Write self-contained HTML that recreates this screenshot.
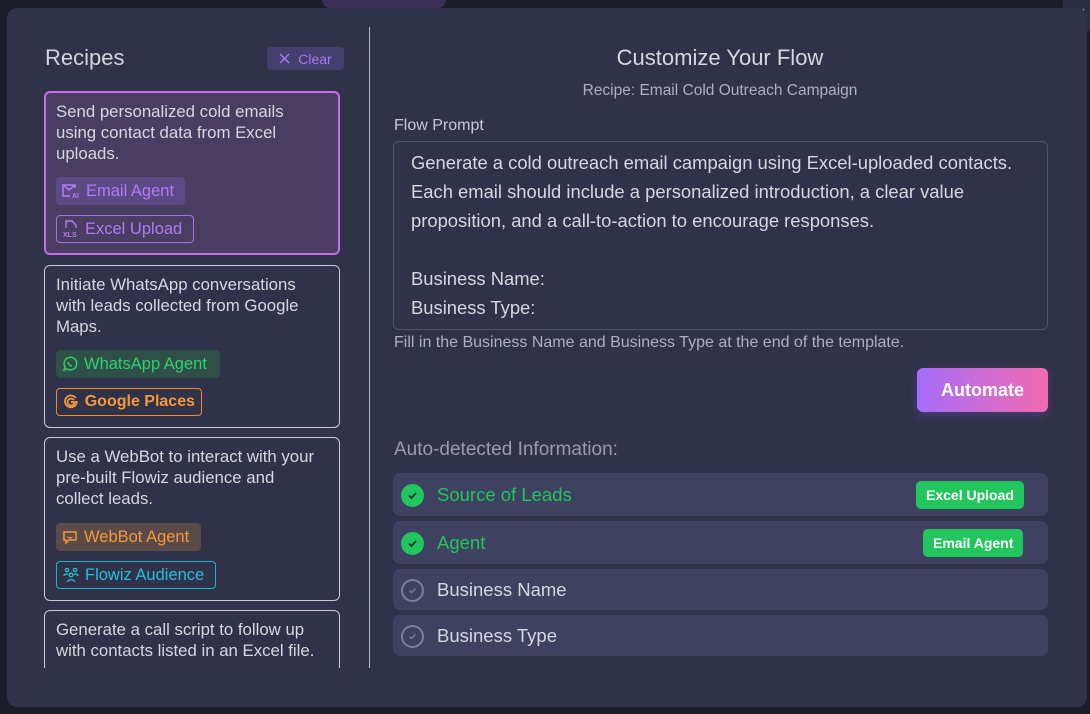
<!DOCTYPE html>
<html><head><meta charset="utf-8"><style>
*{box-sizing:border-box;margin:0;padding:0}
body{width:1090px;height:714px;overflow:hidden;background:#1b1d29;font-family:"Liberation Sans",sans-serif;position:relative}
.abs{position:absolute}
.modal{left:7px;top:8px;width:1080px;height:699px;background:#2f3248;border-radius:10px}
.card{position:absolute;left:44px;width:296px;border:1px solid #c9cad2;border-radius:6px;padding:0 11px}
.card p{color:#d6d7e0;font-size:16.8px;line-height:21px;margin-top:8px;white-space:nowrap}
.chip{position:absolute;left:11px;height:28px;border-radius:4px;font-size:16.5px;display:flex;align-items:center;padding:0 6px;gap:6px;white-space:nowrap}
.row{position:absolute;left:393px;width:655px;background:#3e4160;border-radius:7px}
.row .t{position:absolute;left:44px;font-size:18.5px;top:50%;transform:translateY(-50%)}
.ic{position:absolute;left:8px;top:50%;margin-top:-11px;width:23px;height:23px;border-radius:50%}
.badge{position:absolute;top:50%;transform:translateY(-50%);background:#22c55e;color:#fff;font-weight:bold;font-size:14px;border-radius:5px;height:28px;display:flex;align-items:center;padding:0 10px}
</style></head><body>
<div class="abs" style="left:322px;top:0;width:124px;height:8px;background:#3a2f55;border-radius:0 0 20px 20px"></div>
<div class="abs" style="left:1063px;top:0;width:27px;height:31px;background:#2c2f44"></div>
<svg class="abs" style="left:1070px;top:7px" width="16" height="16" viewBox="0 0 16 16"><path d="M2 2L14 14M14 2L2 14" stroke="#8c8fa0" stroke-width="1.6"/></svg>
<div class="abs modal"></div>
<div class="abs" style="left:369px;top:27px;width:1px;height:641px;background:#b8bac4"></div>

<div class="abs" style="left:45px;top:45px;font-size:22px;color:#d3d5de">Recipes</div>
<div class="abs" style="left:267px;top:47px;width:77px;height:23px;background:#453f6e;border-radius:4px;color:#a678f0;font-size:14px;display:flex;align-items:center;justify-content:center;gap:8px"><svg width="11" height="11" viewBox="0 0 11 11"><path d="M1 1L10 10M10 1L1 10" stroke="#a678f0" stroke-width="1.5"/></svg>Clear</div>

<div class="abs" style="left:0;top:0;width:369px;height:668px;overflow:hidden">
<div class="card" style="top:91px;height:164px;border:2px solid #c46ee8;background:#4a3d62;padding:0 10px"><p style="margin-top:8px">Send personalized cold emails<br>using contact data from Excel<br>uploads.</p>
<div class="chip" style="top:84px;left:10px;width:129px;background:#5c4a84;color:#b07cf5"><svg width="18" height="16" viewBox="0 0 18 16"><path d="M13 5V2H1v11h7M1 2l6 5 6-5" fill="none" stroke="#b07cf5" stroke-width="1.5"/><text x="10" y="15" font-size="7" font-weight="bold" fill="#b07cf5" font-family="Liberation Sans">AI</text></svg>Email Agent</div>
<div class="chip" style="top:122px;left:10px;width:138px;border:1px solid #a86ef0;color:#b07cf5"><svg width="16" height="18" viewBox="0 0 16 18"><path d="M3 8V1h6l4 4v3" fill="none" stroke="#b07cf5" stroke-width="1.4"/><text x="0" y="17" font-size="7" font-weight="bold" fill="#b07cf5" font-family="Liberation Sans">XLS</text></svg>Excel Upload</div></div>

<div class="card" style="top:265px;height:163px"><p>Initiate WhatsApp conversations<br>with leads collected from Google<br>Maps.</p>
<div class="chip" style="top:84px;width:164px;background:#2e5049;color:#2fcf6e"><svg width="16" height="16" viewBox="0 0 16 16"><path d="M2 14l1-3.2A6.3 6.3 0 1 1 5.2 13Z" fill="none" stroke="#2fcf6e" stroke-width="1.5"/><path d="M6 6c0 2 2 4 4 4" stroke="#2fcf6e" stroke-width="1.5" fill="none"/></svg>WhatsApp Agent</div>
<div class="chip" style="top:122px;width:146px;border:1px solid #f08a2a;color:#f59a3a;font-weight:bold;font-size:16px"><svg width="16" height="16" viewBox="0 0 16 16"><path d="M13 4A6 6 0 1 0 14 8H8M11 6A3.5 3.5 0 1 0 11.5 9" fill="none" stroke="#f59a3a" stroke-width="1.8"/></svg>Google Places</div></div>

<div class="card" style="top:437px;height:164px"><p>Use a WebBot to interact with your<br>pre-built Flowiz audience and<br>collect leads.</p>
<div class="chip" style="top:85px;width:145px;background:#5a4a48;color:#f5993a"><svg width="16" height="16" viewBox="0 0 16 16"><path d="M2 3h12v8H7l-3 3v-3H2Z" fill="none" stroke="#f5993a" stroke-width="1.5"/><path d="M5.5 8c1.5 1.2 3.5 1.2 5 0" stroke="#f5993a" stroke-width="1.3" fill="none"/></svg>WebBot Agent</div>
<div class="chip" style="top:123px;width:160px;border:1px solid #1ab6d0;color:#22c0dc"><svg width="16" height="16" viewBox="0 0 16 16" fill="none" stroke="#22c0dc" stroke-width="1.3"><circle cx="4" cy="3" r="1.6"/><circle cx="12" cy="3" r="1.6"/><circle cx="8" cy="8" r="1.8"/><path d="M4.5 15c0-3 7-3 7 0M1 9c0-2 3-2.5 4-1.5M15 9c0-2-3-2.5-4-1.5"/></svg>Flowiz Audience</div></div>

<div class="card" style="top:610px;height:80px"><p>Generate a call script to follow up<br>with contacts listed in an Excel file.</p></div>
</div>

<div class="abs" style="left:370px;width:700px;top:45px;text-align:center;font-size:22px;color:#d6d7e0">Customize Your Flow</div>
<div class="abs" style="left:370px;width:700px;top:82px;text-align:center;font-size:15.5px;color:#aeb0be">Recipe: Email Cold Outreach Campaign</div>
<div class="abs" style="left:394px;top:117px;font-size:16px;color:#c8c9d4">Flow Prompt</div>
<div class="abs" style="left:393px;top:141px;width:655px;height:189px;border:1px solid #505470;border-radius:6px;padding:6px 17px;font-size:18.4px;line-height:29px;color:#d6d7e0;white-space:nowrap;overflow:hidden">Generate a cold outreach email campaign using Excel-uploaded contacts.<br>Each email should include a personalized introduction, a clear value<br>proposition, and a call-to-action to encourage responses.<br><br>Business Name:<br>Business Type:</div>
<div class="abs" style="left:394px;top:334px;font-size:16px;color:#aeb0be">Fill in the Business Name and Business Type at the end of the template.</div>
<div class="abs" style="left:917px;top:368px;width:131px;height:44px;border-radius:6px;background:linear-gradient(90deg,#a66cf8,#f26bb0);color:#fff;font-weight:bold;font-size:18px;display:flex;align-items:center;justify-content:center;box-shadow:0 4px 10px rgba(120,80,200,.35)">Automate</div>
<div class="abs" style="left:394px;top:439px;font-size:19px;color:#9a9cae">Auto-detected Information:</div>

<div class="row" style="top:473px;height:43px"><div class="ic" style="background:#22c55e"><svg width="23" height="23" viewBox="0 0 23 23"><path d="M8 11.5l2.5 2.5 4.5-5" stroke="#1e3a2c" stroke-width="1.8" fill="none"/></svg></div><span class="t" style="color:#22c55e">Source of Leads</span><div class="badge" style="left:523px">Excel Upload</div></div>
<div class="row" style="top:521px;height:43px"><div class="ic" style="background:#22c55e"><svg width="23" height="23" viewBox="0 0 23 23"><path d="M8 11.5l2.5 2.5 4.5-5" stroke="#1e3a2c" stroke-width="1.8" fill="none"/></svg></div><span class="t" style="color:#22c55e">Agent</span><div class="badge" style="left:530px">Email Agent</div></div>
<div class="row" style="top:569px;height:41px"><div class="ic" style="border:2px solid #7c7f96"><svg width="19" height="19" viewBox="0 0 19 19"><path d="M6.5 9.5l2 2 4-4" stroke="#7c7f96" stroke-width="1.4" fill="none"/></svg></div><span class="t" style="color:#d6d7e0">Business Name</span></div>
<div class="row" style="top:615px;height:41px"><div class="ic" style="border:2px solid #7c7f96"><svg width="19" height="19" viewBox="0 0 19 19"><path d="M6.5 9.5l2 2 4-4" stroke="#7c7f96" stroke-width="1.4" fill="none"/></svg></div><span class="t" style="color:#d6d7e0">Business Type</span></div>
</body></html>
